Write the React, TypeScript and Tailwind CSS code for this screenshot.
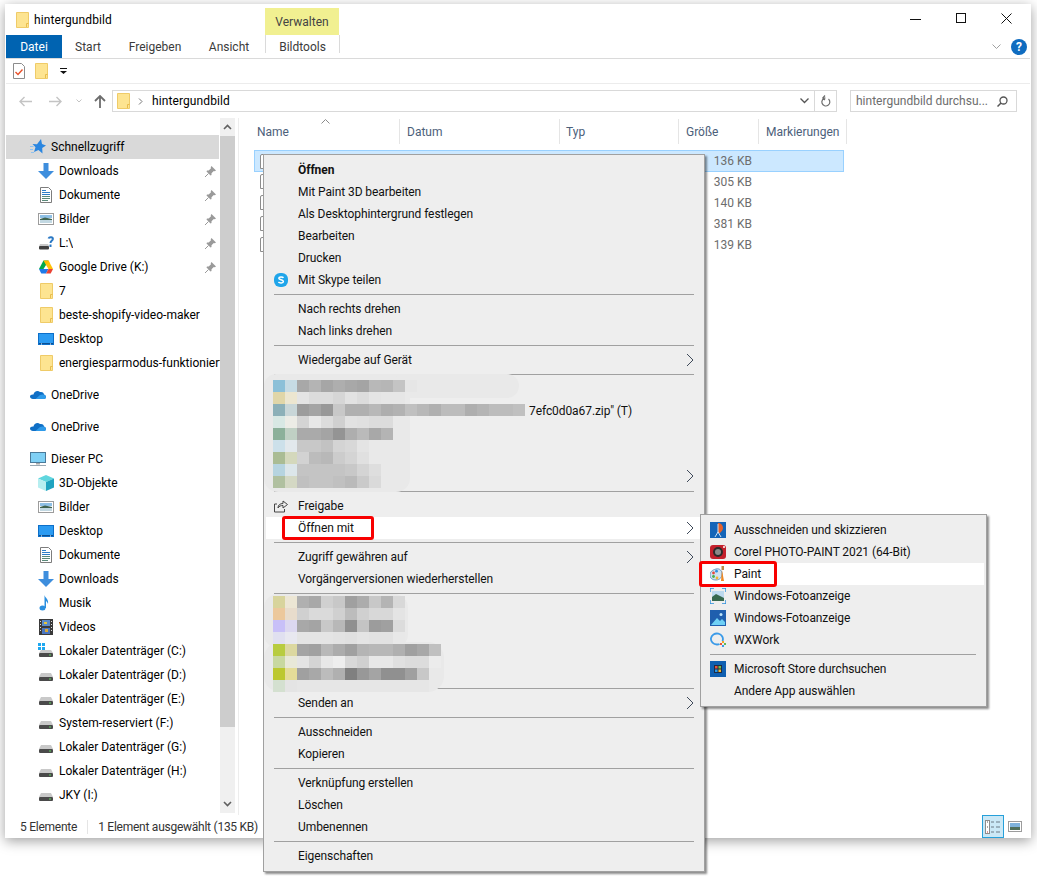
import type { ReactNode } from "react"

const Folder = () => (
  <svg width="13" height="16" viewBox="0 0 13 16" className="shrink-0">
    <path d="M.5.5h12v15H.5z" fill="#fde491" stroke="#efcb68" />
    <path d="M10.5 15v-3.5H12.5" fill="none" stroke="#e8bd4c" />
  </svg>
)
const Star = () => (
  <svg width="16" height="16" viewBox="0 0 16 16" className="shrink-0">
    <path d="M11 0l1 5 4 1.500-3.800 2.500.3 5.500L8.500 11 4 13l1.500-4.800L2.500 5l4.500.2z" fill="#2a86e0" />
    <path d="M0 7.500h3.500M0 10.500h3M1 13.500h3" stroke="#8fc2ef" />
  </svg>
)
const Download = () => (
  <svg width="16" height="16" viewBox="0 0 16 16" className="shrink-0">
    <path d="M5.500 0h5v8H16l-8 8-8-8h5.500z" fill="#3e8edd" />
  </svg>
)
const Doc = () => (
  <svg width="16" height="16" viewBox="0 0 16 16" className="shrink-0">
    <path d="M2.500.500h8l3 3v12h-11z" fill="#fff" stroke="#7d7d7d" />
    <path d="M4 3.500h4M4 5.500h8M4 7.500h8" stroke="#2f7fc8" />
    <path d="M4 9.500h8M4 11.500h8M4 13.500h6" stroke="#5a8a7a" />
  </svg>
)
const Pic = () => (
  <svg width="16" height="16" viewBox="0 0 16 16" className="shrink-0">
    <rect x=".5" y="2.500" width="15" height="11" fill="#fff" stroke="#9c9c9c" />
    <rect x="2" y="4" width="12" height="3" fill="#8fc0e6" />
    <path d="M2 8l5-1.500L14 8v1H2z" fill="#3f6350" />
    <rect x="2" y="9" width="12" height="3" fill="#c2d8e2" />
  </svg>
)
const Drive = () => (
  <svg width="16" height="16" viewBox="0 0 16 16" className="shrink-0">
    <path d="M3 6h10l2 4H1z" fill="#c9c9c9" />
    <rect x="1" y="10" width="14" height="4" rx="1" fill="#4a4a4a" />
    <rect x="11" y="11.500" width="2" height="1" fill="#5fd35f" />
  </svg>
)
const DriveQ = () => (
  <svg width="16" height="16" viewBox="0 0 16 16" className="shrink-0">
    <path d="M2 9h8l1.500 2.500H1z" fill="#c9c9c9" />
    <rect x="1" y="11" width="10" height="3.500" rx="1" fill="#404040" />
    <path d="M10.500 3.500c.8-2 4.800-1.800 4.300.7-.4 1.700-2.300 1.600-2.300 3.800M12.500 9.500v2.500" fill="none" stroke="#2a78c4" strokeWidth="2" />
  </svg>
)
const DriveWin = () => (
  <svg width="16" height="16" viewBox="0 0 16 16" className="shrink-0">
    <path d="M0 0h3v3H0zM4 0h3v3H4zM0 4h3v3H0zM4 4h3v3H4z" fill="#1fa8f0" />
    <path d="M3 7h10l2 3H1z" fill="#c9c9c9" />
    <rect x="1" y="10" width="14" height="4" rx="1" fill="#4a4a4a" />
    <rect x="11" y="11.500" width="2" height="1" fill="#5fd35f" />
  </svg>
)
const GDrive = () => (
  <svg width="16" height="16" viewBox="0 0 16 16" className="shrink-0">
    <path d="M5.500 1.500h5L8 6 5.500 10H1z" fill="#00a94b" />
    <path d="M5.500 1.500h5l1 2L8 6z" fill="#ffba00" />
    <path d="M10.500 1.500L15 10h-4.500L8 6z" fill="#ffc107" />
    <path d="M1 10h9.500L8 14.500H3.300z" fill="#1f7ae8" />
    <path d="M10.500 10H15l-2.300 4.500H8z" fill="#ea4335" />
  </svg>
)
const Desktop = () => (
  <svg width="16" height="16" viewBox="0 0 16 16" className="shrink-0">
    <rect y="2" width="16" height="12" fill="#0d6fc9" />
    <rect x="1" y="3" width="14" height="9" fill="#2b9bf2" />
    <path d="M1 12h14v1H1z" fill="#0b4f91" />
    <path d="M3 13h1M12 13h1" stroke="#fff" />
  </svg>
)
const Cloud = () => (
  <svg width="16" height="16" viewBox="0 0 16 16" className="shrink-0">
    <path d="M3.500 7.500C4 4.500 7.500 3 10 5c2.500-.5 4 1 4 2.500 1.500.3 2 1.500 2 2.500 0 1.200-1 2-2 2H3c-1.700 0-3-1-3-2.500C0 8 1.500 7.300 3.500 7.500z" fill="#0f6fc6" />
    <path d="M5.500 12L10 8c2-1 4-.5 4.500 0 1 .5 1.500 1.500 1.500 2.200 0 1-1 1.800-2 1.800z" fill="#2f9bea" />
  </svg>
)
const Monitor = () => (
  <svg width="16" height="16" viewBox="0 0 16 16" className="shrink-0">
    <rect x=".5" y="1.500" width="15" height="10" fill="#7fd0f5" stroke="#4a7a9a" />
    <path d="M6 12h4v1.500H6z" fill="#a8a8a8" />
    <path d="M0 14.500h16" stroke="#9aa8b2" />
  </svg>
)
const Cube = () => (
  <svg width="16" height="16" viewBox="0 0 16 16" className="shrink-0">
    <path d="M8 0l8 3.500-8 3.500-8-3.500z" fill="#5fd6de" />
    <path d="M0 3.500L8 7v9l-8-3.500z" fill="#b6eef0" />
    <path d="M16 3.500L8 7v9l8-3.500z" fill="#1fa3c0" />
  </svg>
)
const Note = () => (
  <svg width="16" height="16" viewBox="0 0 16 16" className="shrink-0">
    <ellipse cx="4.500" cy="13" rx="3" ry="2.500" fill="#2a8fe0" />
    <path d="M6.500 13V0c.5 3 4.500 4 3.500 9-.5-2-2-3-2-3v7z" fill="#2a8fe0" />
  </svg>
)
const Film = () => (
  <svg width="16" height="16" viewBox="0 0 16 16" className="shrink-0">
    <rect x="1" width="14" height="16" fill="#3a3a3a" />
    <rect x="4" y="1" width="8" height="6" fill="#5a8ac8" />
    <rect x="4" y="9" width="8" height="6" fill="#4a76c0" />
    <rect x="6" y="3" width="3" height="2" fill="#e6c53a" />
    <rect x="7" y="10" width="3" height="3" fill="#d8a83a" />
    <path d="M2.500 2v12M13.500 2v12" stroke="#ddd" strokeDasharray="1 2" />
  </svg>
)
const Pin = () => (
  <svg width="11" height="11" viewBox="0 0 11 11">
    <path d="M6.500 0L11 4.500 9.800 5.300 8.800 5 6.500 7.300 6.500 9 5.500 9.500 1.500 5.500 2 4.500 3.700 4.500 6 2.200 5.700 1.200z" fill="#9a9a9a" />
    <path d="M3.500 7.500L0 11" stroke="#9a9a9a" />
  </svg>
)

const quick: { label: string; icon: ReactNode; pin?: boolean }[] = [
  { label: "Downloads", icon: <Download />, pin: true },
  { label: "Dokumente", icon: <Doc />, pin: true },
  { label: "Bilder", icon: <Pic />, pin: true },
  { label: "L:\\", icon: <DriveQ />, pin: true },
  { label: "Google Drive (K:)", icon: <GDrive />, pin: true },
  { label: "7", icon: <div className="pl-[2px]"><Folder /></div> },
  { label: "beste-shopify-video-maker", icon: <div className="pl-[2px]"><Folder /></div> },
  { label: "Desktop", icon: <Desktop /> },
  { label: "energiesparmodus-funktioniert-nicht", icon: <div className="pl-[2px]"><Folder /></div> },
]
const thisPc: { label: string; icon: ReactNode }[] = [
  { label: "3D-Objekte", icon: <Cube /> },
  { label: "Bilder", icon: <Pic /> },
  { label: "Desktop", icon: <Desktop /> },
  { label: "Dokumente", icon: <Doc /> },
  { label: "Downloads", icon: <Download /> },
  { label: "Musik", icon: <Note /> },
  { label: "Videos", icon: <Film /> },
  { label: "Lokaler Datenträger (C:)", icon: <DriveWin /> },
  { label: "Lokaler Datenträger (D:)", icon: <Drive /> },
  { label: "Lokaler Datenträger (E:)", icon: <Drive /> },
  { label: "System-reserviert (F:)", icon: <Drive /> },
  { label: "Lokaler Datenträger (G:)", icon: <Drive /> },
  { label: "Lokaler Datenträger (H:)", icon: <Drive /> },
  { label: "JKY (I:)", icon: <Drive /> },
]

const NavRow = ({ icon, label, pin, top }: { icon: ReactNode; label: string; pin?: boolean; top?: boolean }) => (
  <div className={`h-6 flex items-center shrink-0 ${top ? "pl-6" : "pl-8"}`}>
    <div className="w-4 shrink-0">{icon}</div>
    <span className="ml-[5px] whitespace-nowrap overflow-hidden">{label}</span>
    {pin && (
      <span className="ml-auto mr-[4px] shrink-0">
        <Pin />
      </span>
    )}
  </div>
)

const Sidebar = () => (
  <div className="w-[214px] shrink-0 pt-[17px] flex flex-col overflow-hidden text-black">
    <div className="h-6 flex items-center pl-6 bg-[#d9d9d9] mr-px">
      <div className="w-4">
        <Star />
      </div>
      <span className="ml-[5px]">Schnellzugriff</span>
    </div>
    {quick.map((q) => (
      <NavRow key={q.label} icon={q.icon} label={q.label} pin={q.pin} />
    ))}
    <div className="h-2 shrink-0"></div>
    <NavRow top icon={<Cloud />} label="OneDrive" />
    <div className="h-2 shrink-0"></div>
    <NavRow top icon={<Cloud />} label="OneDrive" />
    <div className="h-2 shrink-0"></div>
    <NavRow top icon={<Monitor />} label="Dieser PC" />
    {thisPc.map((p) => (
      <NavRow key={p.label} icon={p.icon} label={p.label} />
    ))}
  </div>
)

const ScrollBar = () => (
  <div className="w-[15px] shrink-0 mb-[2px] bg-[#f0f0f0] flex flex-col">
    <div className="h-[18px] flex items-center justify-center">
      <svg width="9" height="6" viewBox="0 0 9 6">
        <path d="M1 5l3.500-3.500L8 5" fill="none" stroke="#606060" strokeWidth="1.600" />
      </svg>
    </div>
    <div className="h-[591px] bg-[#cdcdcd]"></div>
    <div className="flex-1"></div>
    <div className="h-[18px] flex items-center justify-center">
      <svg width="9" height="6" viewBox="0 0 9 6">
        <path d="M1 1l3.500 3.500L8 1" fill="none" stroke="#606060" strokeWidth="1.600" />
      </svg>
    </div>
  </div>
)

const columns = [
  { label: "Name", w: "w-[150px] pl-[7px]" },
  { label: "Datum", w: "w-[160px] pl-[7px]" },
  { label: "Typ", w: "w-[119px] pl-[6px]" },
  { label: "Größe", w: "w-[80px] pl-[7px]" },
  { label: "Markierungen", w: "w-[88px] pl-[7px]" },
]
const sizes = ["136 KB", "305 KB", "140 KB", "381 KB", "139 KB"]

const FileList = () => (
  <div className="flex-1 border-l border-[#ededed] pl-[11px] ml-[3px] pt-px relative">
    <div className="flex h-[25px]">
      {columns.map((c) => (
        <div key={c.label} className={`${c.w} border-r border-[#e5e5e5] flex items-center text-[#4c607a] box-border`}>
          {c.label}
        </div>
      ))}
    </div>
    <svg width="9" height="5" viewBox="0 0 9 5" className="absolute left-[82px] top-px">
      <path d="M.5 4.500l4-4 4 4" fill="none" stroke="#8a8a8a" />
    </svg>
    <div className="mt-[6px] ml-[4px] w-[590px] flex flex-col">
      {sizes.map((s, i) => (
        <div
          key={s}
          className={`flex items-center ${i === 0 ? "h-[22px] -mb-px bg-[#cce8ff] border border-[#99d1ff] pl-[5px] pr-[91px]" : "h-[21px] pl-[6px] pr-[92px]"}`}
        >
          <div className="w-[14px] h-[15px] bg-white border border-[#8c8c8c] rounded-tl-[2px]"></div>
          <span className="ml-auto text-[#6d6d6d]">{s}</span>
        </div>
      ))}
    </div>
  </div>
)

const mosaicA = [
  ["#8cc0d8", "#c6dbe4", "#a8a8a8", "#b4b4b4", "#a6a6a6", "#aeaeae", "#a8a8a8", "#a4a4a4", "#b8b8b8", "#b6b6b6", "#c4c4c4", "#e6e6e6"],
  ["#e0d6a8", "#ece6d0", "#e4e4e4", "#dcdcdc", "#dcdcdc", "#d6d6d6", "#e2e2e2", "#dcdcdc", "#e4e4e4", "#e6e6e6", "#e6e6e6"],
  ["#8cb0b8", "#c8d6d8", "#9c9c9c", "#a4a4a4", "#989898", "#c8c8c8", "#b0b0b0", "#b0b0b0", "#b8b8b8", "#aeaeae", "#b2b2b2", "#c0c0c0", "#b8b8b8", "#b0b0b0", "#bcbcbc", "#bcbcbc", "#aeaeae", "#b4b4b4", "#bcbcbc", "#bcbcbc", "#c0c0c0"],
  ["#d8e8e4", "#ecece6", "#d4d4d4", "#e8e8e8", "#dcdcdc", "#d0d0d0", "#e2e2e2", "#e0e0e0", "#dcdcdc", "#dcdcdc"],
  ["#8cb09a", "#c0d0c4", "#aaaaaa", "#aaaaaa", "#a4a4a4", "#949494", "#aeaeae", "#bababa", "#a8a8a8", "#b4b4b4"],
  ["#cce0ea", "#e2e8ec", "#c8c8c8", "#c8c8c8", "#c2c2c2", "#d4d4d4", "#d8d8d8", "#e4e4e4"],
  ["#aabc94", "#d4d8bc", "#d2d2d2", "#bcbcbc", "#b8b8b8", "#cccccc", "#d4d4d4", "#e0e0e0"],
  ["#b6d4e0", "#dce6ea", "#c4c4c4", "#c4c4c4", "#c4c4c4", "#c4c4c4", "#c8c8c8", "#d4d4d4", "#dedede"],
  ["#b0c0a0", "#d4d8c4", "#c0c0c0", "#c4c4c4", "#c4c4c4", "#c0c0c0", "#bababa", "#cacaca", "#dadada"],
]
const mosaicB = [
  ["#d8d49c", "#ece6d4", "#b0b0b0", "#a8a8a8", "#d0d0d0", "#c8c8c8", "#a0a0a0", "#acacac", "#c8c8c8", "#b4b4b4", "#d8d8d8"],
  ["#ecc89c", "#e8dccc", "#d0d0d0", "#dadada", "#dadada", "#d0d0d0", "#bcbcbc", "#d0d0d0", "#d8d8d8", "#d8d8d8", "#e4e4e4"],
  ["#c8c0f8", "#dcd8f0", "#a8a8a8", "#a4a4a4", "#c8c8c8", "#b8b8b8", "#909090", "#c4c4c4", "#9c9c9c", "#a0a0a0", "#dcdcdc"],
  ["#e0e0f0", "#e8e8f0", "#e4e4e4", "#e4e4e4", "#e4e4e4", "#e2e2e2", "#e0e0e0", "#e4e4e4", "#e2e2e2", "#e2e2e2", "#e8e8e8"],
  ["#b8cc40", "#dcd8a0", "#a4a4a4", "#a0a0a0", "#b8b8b8", "#acacac", "#a0a0a0", "#b4b4b4", "#b8b8b8", "#b8b8b8", "#b0b0b0", "#a0a0a0", "#a8a8a8", "#c0c0c0"],
  ["#c8d8a0", "#e8e8d8", "#e4e4e4", "#d4d4d4", "#e8e8e8", "#eeeeee", "#d8d8d8", "#d0d0d0", "#e8e8e8", "#e8e8e8", "#e0e0e0", "#dcdcdc", "#dcdcdc", "#ececec"],
  ["#bcc830", "#e4dc98", "#a0a0a0", "#a8a8a8", "#bcbcbc", "#b0b0b0", "#808080", "#989898", "#a4a4a4", "#909090", "#909090", "#a0a0a0", "#c8c8c8"],
  ["#d4e0d0", "#e4e4e4", "#e6e6e6", "#e6e6e6", "#e6e6e6", "#e6e6e6", "#e6e6e6", "#e6e6e6", "#e6e6e6", "#e6e6e6", "#e6e6e6", "#e6e6e6", "#e6e6e6"],
]

const Mosaic = ({ rows, tail, tailRow }: { rows: string[][]; tail?: string; tailRow?: number }) => (
  <div className="relative flex flex-col">
    {rows.map((r, i) => (
      <div key={i} className="flex h-3 items-center">
        {r.map((c, j) => (
          <div key={j} className="w-3 h-3" style={{ backgroundColor: c }}></div>
        ))}
        {tail && tailRow === i && <span className="ml-[4px] whitespace-nowrap relative top-px">{tail}</span>}
      </div>
    ))}
  </div>
)

const Arrow = ({ className = "" }: { className?: string }) => (
  <svg width="8" height="14" viewBox="0 0 8 14" className={className}>
    <path d="M1 1l6 6-6 6" fill="none" stroke="#3f4a5a" />
  </svg>
)

const Item = ({ label, arrow, bold, icon, children, hot }: { label: string; arrow?: boolean; bold?: boolean; icon?: ReactNode; children?: ReactNode; hot?: boolean }) => (
  <div className={`h-[22px] flex items-center mx-[2px] relative ${hot ? "bg-white" : ""}`}>
    <div className="w-[32px] shrink-0 pl-[8px] flex items-center">{icon}</div>
    <span className={bold ? "font-bold" : ""}>{label}</span>
    {arrow && <Arrow className="ml-auto mr-[8px]" />}
    {children}
  </div>
)
const Sep = () => (
  <div className="h-[7px] flex items-center px-[10px]">
    <div className="h-px w-full bg-[#a0a0a0]"></div>
  </div>
)

const ShareIcon = () => (
  <svg width="14" height="14" viewBox="0 0 14 14">
    <path d="M3 5H.5v8h10v-3" fill="none" stroke="#444" />
    <path d="M4 9c0-3 2-4.500 5-4.500V2l4.500 3.500L9 9V6.500C7 6.500 5 7 4 9z" fill="none" stroke="#444" />
  </svg>
)
const SkypeIcon = () => (
  <svg width="14" height="14" viewBox="0 0 14 14">
    <rect width="14" height="14" rx="6" fill="#1fa5ea" />
    <path d="M9.500 4.800C8.800 3.800 4.800 3.600 4.800 5.300c0 1.900 4.600 1.100 4.600 3.300 0 1.800-3.900 1.700-5 .5" fill="none" stroke="#fff" strokeWidth="1.500" />
  </svg>
)

const ContextMenu = () => (
  <div className="absolute left-[258px] top-[150px] w-[442px] box-border border border-[#a0a0a0] bg-[#eeeeee] py-[4px] shadow-[2px_2px_2px_rgba(0,0,0,0.45)] text-[#111] tracking-[-0.08px]">
    <Item label="Öffnen" bold />
    <Item label="Mit Paint 3D bearbeiten" />
    <Item label="Als Desktophintergrund festlegen" />
    <Item label="Bearbeiten" />
    <Item label="Drucken" />
    <Item label="Mit Skype teilen" icon={<SkypeIcon />} />
    <Sep />
    <Item label="Nach rechts drehen" />
    <Item label="Nach links drehen" />
    <Sep />
    <Item label="Wiedergabe auf Gerät" arrow />
    <Sep />
    <div className="h-[110px] relative pt-[2px] pl-[9px]">
      <div className="absolute left-0 top-[-4px] w-[255px] h-[24px] rounded-[12px] bg-[#e9e9e9]"></div>
      <div className="absolute left-0 top-[-2px] w-[146px] h-[116px] rounded-[14px] bg-[#e9e9e9]"></div>
      <Mosaic rows={mosaicA} tail={'7efc0d0a67.zip" (T)'} tailRow={2} />
      <Arrow className="absolute right-[10px] top-[91px]" />
    </div>
    <Sep />
    <Item label="Freigabe" icon={<ShareIcon />} />
    <Item label="Öffnen mit" arrow hot>
      <div className="absolute left-[16px] top-[-1px] w-[92px] h-[24px] border-[3px] border-[#f80000] rounded-[3px]"></div>
    </Item>
    <Sep />
    <Item label="Zugriff gewähren auf" arrow />
    <Item label="Vorgängerversionen wiederherstellen" />
    <Sep />
    <div className="h-[88px] relative z-10 -mt-px pl-[9px]">
      <div className="absolute left-0 top-[-2px] w-[144px] h-[54px] rounded-[14px] bg-[#e9e9e9]"></div>
      <div className="absolute left-0 top-[46px] w-[180px] h-[50px] rounded-[16px] bg-[#e9e9e9]"></div>
      <Mosaic rows={mosaicB} />
    </div>
    <div className="h-px"></div>
    <Sep />
    <Item label="Senden an" arrow />
    <Sep />
    <Item label="Ausschneiden" />
    <Item label="Kopieren" />
    <Sep />
    <Item label="Verknüpfung erstellen" />
    <Item label="Löschen" />
    <Item label="Umbenennen" />
    <Sep />
    <Item label="Eigenschaften" />
  </div>
)

const SnipIcon = () => (
  <svg width="16" height="16" viewBox="0 0 16 16">
    <rect width="16" height="16" fill="#1565b8" />
    <path d="M8 1a5 5 0 0 1 5 5c0 2-2 4-3 5H8z" fill="#e8622a" />
    <path d="M8 2v9M5 15l3-5 3 5" fill="none" stroke="#cfe3f5" />
  </svg>
)
const CorelIcon = () => (
  <svg width="16" height="16" viewBox="0 0 16 16">
    <rect y="1" width="16" height="14" rx="3" fill="#c3202c" />
    <circle cx="8" cy="8" r="5" fill="#2b2b2b" />
    <circle cx="8" cy="8" r="3" fill="#8a8a8a" />
    <circle cx="14" cy="3" r="1" fill="#fff" />
  </svg>
)
const PaintIcon = () => (
  <svg width="16" height="16" viewBox="0 0 16 16">
    <path d="M6 3c4-1 6 2 6 5s-2 6-6 6-6-2-6-5 2-5 6-6z" fill="#cfe2f2" stroke="#4f86b4" strokeWidth=".8" />
    <circle cx="3.500" cy="7" r="1.400" fill="#e64a3c" />
    <circle cx="6.500" cy="5.200" r="1.400" fill="#2f8fe0" />
    <circle cx="3.500" cy="10.500" r="1.400" fill="#47b04b" />
    <circle cx="7" cy="12" r="1.400" fill="#f2b632" />
    <path d="M12 4l-1 11h3z" fill="#f08a24" />
    <path d="M11.500 0h2.500v4h-2.500z" fill="#b98a4a" />
  </svg>
)
const PhotoFrame = () => (
  <svg width="16" height="16" viewBox="0 0 16 16">
    <path d="M0 4V0h4M12 0h4v4M16 12v4h-4M4 16H0v-4" fill="none" stroke="#2a8fdc" strokeWidth="1.400" />
    <rect x="2" y="3" width="12" height="10" fill="#bcd9ee" />
    <path d="M2 9l4-3 8 4v3H2z" fill="#36684e" />
  </svg>
)
const PhotoBlue = () => (
  <svg width="16" height="16" viewBox="0 0 16 16">
    <rect width="16" height="16" fill="#1f5fae" />
    <path d="M1 15l6-7 3 3 2-2 3 3v3z" fill="#6fd0f5" />
    <circle cx="11" cy="4.500" r="1.500" fill="#bfe6fa" />
  </svg>
)
const WxIcon = () => (
  <svg width="16" height="16" viewBox="0 0 16 16">
    <path d="M12.500 9A6 5.500 0 1 0 7 12.500c1 0 2-.2 2.500-.5" fill="none" stroke="#3a9ae8" strokeWidth="1.800" />
    <path d="M12 9h2v2h-2z" fill="#f5a623" />
    <path d="M10 11h2v2h-2z" fill="#e8503c" />
    <path d="M14 11h2v2h-2z" fill="#5cb85c" />
    <path d="M12 13h2v2h-2z" fill="#3a9ae8" />
  </svg>
)
const StoreIcon = () => (
  <svg width="16" height="16" viewBox="0 0 16 16">
    <rect width="16" height="16" fill="#0f5fb0" />
    <rect x="4" y="4" width="8" height="8" fill="#1e2c44" />
    <rect x="5" y="5" width="2.500" height="2.500" fill="#e8503c" />
    <rect x="8.500" y="5" width="2.500" height="2.500" fill="#6cc04a" />
    <rect x="5" y="8.500" width="2.500" height="2.500" fill="#2a9be8" />
    <rect x="8.500" y="8.500" width="2.500" height="2.500" fill="#f5b82e" />
  </svg>
)

const SubItem = ({ label, icon, hot, children }: { label: string; icon?: ReactNode; hot?: boolean; children?: ReactNode }) => (
  <div className={`h-[22px] mx-[2px] flex items-center relative ${hot ? "bg-white" : ""}`}>
    <div className="w-[31px] pl-[7px] shrink-0 flex items-center">{icon}</div>
    <span>{label}</span>
    {children}
  </div>
)

const SubMenu = () => (
  <div className="absolute left-[695px] top-[510px] w-[287px] box-border border border-[#a0a0a0] bg-[#eeeeee] py-[4px] shadow-[2px_2px_2px_rgba(0,0,0,0.45)] text-[#111] tracking-[-0.08px] z-20">
    <SubItem label="Ausschneiden und skizzieren" icon={<SnipIcon />} />
    <SubItem label="Corel PHOTO-PAINT 2021 (64-Bit)" icon={<CorelIcon />} />
    <SubItem label="Paint" icon={<PaintIcon />} hot>
      <div className="absolute left-[-4px] top-[-2px] w-[78px] h-[26px] border-[3px] border-[#f80000] rounded-[3px]"></div>
    </SubItem>
    <SubItem label="Windows-Fotoanzeige" icon={<PhotoFrame />} />
    <SubItem label="Windows-Fotoanzeige" icon={<PhotoBlue />} />
    <SubItem label="WXWork" icon={<WxIcon />} />
    <div className="h-[7px] flex items-center pl-[9px] pr-[10px]">
      <div className="h-px w-full bg-[#a0a0a0]"></div>
    </div>
    <SubItem label="Microsoft Store durchsuchen" icon={<StoreIcon />} />
    <SubItem label="Andere App auswählen" />
  </div>
)

export default function App() {
  return (
    <div className="w-[1037px] h-[879px] bg-white overflow-hidden pt-[4px] pl-[5px] text-[12px] text-black font-['Roboto','Liberation_Sans',sans-serif]">
      <div className="w-[1026px] h-[834px] bg-white relative flex flex-col px-px shadow-[0_3px_12px_rgba(0,0,0,0.38)]">
        {/* title bar */}
        <div className="h-[31px] flex shrink-0">
          <div className="w-[259px] flex items-center pl-[10px] pt-[1px]">
            <Folder />
            <span className="ml-[5px] tracking-[0.1px]">hintergundbild</span>
          </div>
          <div className="w-[74px] h-[27px] self-end bg-[#f1f091] flex items-center justify-center text-[#444]">Verwalten</div>
          <div className="ml-auto flex items-center pb-[3px]">
            <svg width="11" height="11" viewBox="0 0 11 11" className="mr-[35px]">
              <path d="M0 6.500h11" stroke="#111" />
            </svg>
            <svg width="10" height="10" viewBox="0 0 10 10" className="mr-[35px]">
              <rect x=".5" y=".5" width="9" height="9" fill="none" stroke="#111" />
            </svg>
            <svg width="11" height="11" viewBox="0 0 11 11" className="mr-[18px]">
              <path d="M.5.500l10 10M10.500.500l-10 10" stroke="#111" />
            </svg>
          </div>
        </div>
        {/* ribbon tabs */}
        <div className="h-[24px] shrink-0 flex border-b border-[#dadada] text-[#3b3b3b]">
          <div className="w-[56px] h-[23px] bg-[#0063b1] text-white flex items-center justify-center">Datei</div>
          <div className="w-[52px] flex items-center justify-center">Start</div>
          <div className="w-[82px] flex items-center justify-center">Freigeben</div>
          <div className="w-[66px] flex items-center justify-center">Ansicht</div>
          <div className="ml-[3px] w-[75px] h-[18px] border-x border-[#dadada] flex items-center justify-center pt-[5px]">Bildtools</div>
          <div className="ml-auto flex items-center pr-[3px]">
            <svg width="9" height="5" viewBox="0 0 9 5" className="mr-[10px]">
              <path d="M.5.500l4 4 4-4" fill="none" stroke="#a0a0a0" />
            </svg>
            <div className="w-4 h-4 rounded-full bg-[#0f6cc0] text-white text-[12px] font-bold flex items-center justify-center leading-none">?</div>
          </div>
        </div>
        {/* quick access */}
        <div className="h-[25px] shrink-0 flex items-center border-b border-[#ececec] pl-[7px]">
          <svg width="12" height="16" viewBox="0 0 12 16">
            <path d="M.5.500h8l3 3v12H.5z" fill="#fff" stroke="#8c8c8c" />
            <path d="M2.500 9l2.500 2.500L9.500 6.500" fill="none" stroke="#e8502a" strokeWidth="1.400" />
          </svg>
          <div className="ml-[10px]">
            <Folder />
          </div>
          <svg width="7" height="6" viewBox="0 0 7 6" className="ml-[12px]">
            <path d="M0 0h7v1H0zM0 3h7L3.500 6z" fill="#111" />
          </svg>
        </div>
        {/* address row */}
        <div className="h-[34px] shrink-0 flex items-start pt-[6px]">
          <div className="w-[106px] h-[22px] flex items-center pl-[13px] shrink-0">
            <svg width="13" height="11" viewBox="0 0 13 11">
              <path d="M5.500 1L1 5.500 5.500 10M1 5.500h12" fill="none" stroke="#c4c4c4" strokeWidth="1.400" />
            </svg>
            <svg width="13" height="11" viewBox="0 0 13 11" className="ml-[17px]">
              <path d="M7.500 1L12 5.500 7.500 10M12 5.500H0" fill="none" stroke="#c4c4c4" strokeWidth="1.400" />
            </svg>
            <svg width="6" height="4" viewBox="0 0 6 4" className="ml-[14px]">
              <path d="M.5.500L3 3 5.500.500" fill="none" stroke="#c4c4c4" />
            </svg>
            <svg width="12" height="13" viewBox="0 0 12 13" className="ml-[12px]">
              <path d="M1 6l5-5 5 5M6 1v12" fill="none" stroke="#6d6d6d" strokeWidth="1.800" />
            </svg>
          </div>
          <div className="w-[725px] h-[22px] border border-[#d9d9d9] flex items-center pl-[4px] box-border shrink-0">
            <Folder />
            <svg width="5" height="7" viewBox="0 0 5 7" className="ml-[8px]">
              <path d="M1 .500l3 3-3 3" fill="none" stroke="#777" />
            </svg>
            <span className="ml-[9px] tracking-[0.1px]">hintergundbild</span>
            <svg width="9" height="6" viewBox="0 0 9 6" className="ml-auto mr-[3px]">
              <path d="M.5.500l4 4 4-4" fill="none" stroke="#555" strokeWidth="1.300" />
            </svg>
            <div className="w-px h-full bg-[#d9d9d9] ml-[2px]"></div>
            <svg width="11" height="13" viewBox="0 0 11 13" className="mx-[5px]">
              <path d="M8.500 4A4 4 0 1 1 5.500 3H3M5 0.500L2.800 3 5 5" fill="none" stroke="#6d6d6d" strokeWidth="1.200" />
            </svg>
          </div>
          <div className="ml-[13px] w-[167px] h-[22px] border border-[#d9d9d9] flex items-center pl-[5px] box-border text-[#6d6d6d] shrink-0">
            <span>hintergundbild durchsu...</span>
            <svg width="11" height="11" viewBox="0 0 11 11" className="ml-auto mr-[8px]">
              <circle cx="6.500" cy="4.500" r="3.500" fill="none" stroke="#555" strokeWidth="1.300" />
              <path d="M4 7l-3.500 3.500" stroke="#555" strokeWidth="1.500" />
            </svg>
          </div>
        </div>
        {/* main */}
        <div className="flex-1 flex min-h-0">
          <Sidebar />
          <ScrollBar />
          <FileList />
        </div>
        {/* status bar */}
        <div className="h-[23px] shrink-0 flex items-center text-[#333] pl-[14px] tracking-[-0.25px]">
          <span>5 Elemente</span>
          <div className="w-px h-[14px] bg-[#e5e5e5] ml-[10px]"></div>
          <span className="ml-[10px]">1 Element ausgewählt (135 KB)</span>
          <div className="ml-auto flex items-center pr-[8px]">
            <div className="w-[22px] h-[23px] bg-[#cbe8f6] border border-[#26a0da] flex items-center justify-center box-border">
              <svg width="16" height="14" viewBox="0 0 16 14">
                <rect x=".5" y=".5" width="4" height="13" fill="#fff" stroke="#8c8c8c" />
                <path d="M6 2h3M11 2h4M6 7h3M11 7h4M6 12h3M11 12h4" stroke="#6d7a86" />
                <path d="M2 2h1M2 7h1" stroke="#555" />
                <path d="M2 12h1" stroke="#c03030" />
              </svg>
            </div>
            <svg width="14" height="11" viewBox="0 0 14 11" className="ml-[4px]">
              <rect x=".5" y=".5" width="13" height="10" fill="#fff" stroke="#9c9c9c" />
              <rect x="2" y="2" width="10" height="4" fill="#7fb2dc" />
              <rect x="2" y="6" width="10" height="3" fill="#4f6f5c" />
            </svg>
          </div>
        </div>
        <ContextMenu />
        <SubMenu />
      </div>
    </div>
  )
}
